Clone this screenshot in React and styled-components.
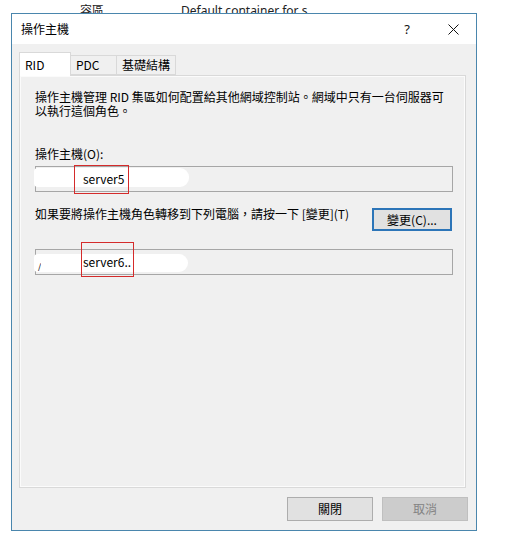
import React from "react";
import styled, { createGlobalStyle } from "styled-components";

const GlobalStyle = createGlobalStyle`
  html, body {
    margin: 0;
    padding: 0;
    background: #fff;
  }
  body {
    font-family: "Noto Sans CJK TC", "Noto Sans", sans-serif;
    font-size: 12px;
    color: #000;
  }
`;

class App extends React.Component {
    constructor(props) {
        super(props);

        this.state = {
            tabs: ["RID", "PDC", "基礎結構"],
            active: 0
        };
    }

    render() {
        return (
            <Page>
                <GlobalStyle/>
                <Backdrop>
                    <BackText left={80}>容區</BackText>
                    <BackText left={77}>Default container for s</BackText>
                </Backdrop>

                <Dialog>
                    <TitleBar>
                        <Title>操作主機</Title>
                        <CaptionButton>?</CaptionButton>
                        <CaptionButton>
                            <svg width="11" height="11" viewBox="0 0 11 11">
                                <path d="M0.5 0.5 L10.5 10.5 M10.5 0.5 L0.5 10.5" stroke="#111" strokeWidth="1" fill="none"/>
                            </svg>
                        </CaptionButton>
                    </TitleBar>

                    <Body>
                        <TabStrip>
                            {this.state.tabs.map((t, i) => (
                                <Tab key={t} active={i === this.state.active} w={[52, 47, 60][i]}>
                                    {t}
                                </Tab>
                            ))}
                        </TabStrip>

                        <Panel>
                            <Description>
                                <Line>操作主機管理 RID 集區如何配置給其他網域控制站。網域中只有一台伺服器可</Line>
                                <Line>以執行這個角色。</Line>
                            </Description>

                            <Label>操作主機(O):</Label>
                            <Field>
                                <Redaction left={-2} top={1} w={155} h={19}/>
                                <FieldText>server5</FieldText>
                                <Highlight left={38} top={-2} w={55} h={29}/>
                            </Field>

                            <TransferRow>
                                <RowText>如果要將操作主機角色轉移到下列電腦，請按一下 [變更](T)</RowText>
                                <DefaultButton>變更(C)...</DefaultButton>
                            </TransferRow>

                            <Field gap={18}>
                                <Redaction left={-2} top={4} w={154} h={18}/>
                                <Stray>/</Stray>
                                <FieldText>server6..</FieldText>
                                <Highlight left={45} top={-8} w={53} h={35}/>
                            </Field>
                        </Panel>

                        <Footer>
                            <Button>關閉</Button>
                            <Button disabled>取消</Button>
                        </Footer>
                    </Body>
                </Dialog>
            </Page>
        );
    }
}

const Page = styled.div`
width: 505px;
height: 547px;
overflow: hidden;
background: #fff;
`;

const Backdrop = styled.div`
display: flex;
height: 13px;
overflow: hidden;
padding-top: 4px;
box-sizing: border-box;
`;

const BackText = styled.span`
margin-left: ${props => props.left}px;
font-family: "Noto Sans", "Noto Sans CJK TC", sans-serif;
font-size: 12px;
line-height: 14px;
color: #222;
white-space: nowrap;
`;

const Dialog = styled.div`
margin-left: 11px;
width: 466px;
height: 518px;
box-sizing: border-box;
border: 1px solid #4a86ad;
background: #f0f0f0;
display: flex;
flex-direction: column;
`;

const TitleBar = styled.div`
height: 30px;
flex-shrink: 0;
background: #fff;
display: flex;
align-items: center;
padding-left: 9px;
`;

const Title = styled.div`
flex: 1;
line-height: 14px;
`;

const CaptionButton = styled.div`
width: 46px;
height: 30px;
display: flex;
align-items: center;
justify-content: center;
font-family: "Noto Sans", sans-serif;
font-size: 13px;
color: #111;
`;

const Body = styled.div`
flex: 1;
display: flex;
flex-direction: column;
padding: 8px 8px 8px 7px;
`;

const TabStrip = styled.div`
display: flex;
align-items: flex-end;
height: 23px;
position: relative;
z-index: 1;
`;

const Tab = styled.div`
box-sizing: border-box;
width: ${props => props.w}px;
height: ${props => props.active ? 24 : 20}px;
margin-bottom: ${props => props.active ? -1 : 0}px;
margin-left: -1px;
&:first-child { margin-left: 0; }
border: 1px solid #d9d9d9;
border-bottom: ${props => props.active ? "none" : "1px solid #d9d9d9"};
background: ${props => props.active ? "#fff" : "#f0f0f0"};
padding-left: 5px;
display: flex;
align-items: center;
line-height: 14px;
`;

const Panel = styled.div`
box-sizing: border-box;
width: 447px;
height: 413px;
border: 1px solid #d9d9d9;
box-shadow: inset 0 0 0 1px #fbfbfb;
background: #f0f0f0;
padding: 14px 12px 0 15px;
display: flex;
flex-direction: column;
`;

const Description = styled.div`
display: flex;
flex-direction: column;
`;

const Line = styled.div`
height: 14px;
line-height: 14px;
white-space: nowrap;
`;

const Label = styled.div`
margin-top: 29px;
line-height: 14px;
`;

const Field = styled.div`
position: relative;
margin-top: ${props => props.gap || 5}px;
height: 26px;
box-sizing: border-box;
border: 1px solid #a6a6a6;
background: #f0f0f0;
display: flex;
align-items: center;
padding-left: 47px;
`;

const Redaction = styled.div`
position: absolute;
left: ${props => props.left}px;
top: ${props => props.top}px;
width: ${props => props.w}px;
height: ${props => props.h}px;
background: #fff;
border-radius: 4px 9px 9px 4px;
`;

const Stray = styled.span`
position: absolute;
left: 1px;
top: 13px;
height: 8px;
overflow: hidden;
font-size: 11px;
line-height: 8px;
color: #333;
`;

const FieldText = styled.span`
position: relative;
line-height: 14px;
`;

const Highlight = styled.div`
position: absolute;
left: ${props => props.left}px;
top: ${props => props.top}px;
width: ${props => props.w}px;
height: ${props => props.h}px;
box-sizing: border-box;
border: 1px solid #d42b2b;
`;

const TransferRow = styled.div`
display: flex;
justify-content: space-between;
align-items: flex-start;
margin-top: 15px;
padding-right: 1px;
`;

const RowText = styled.div`
line-height: 14px;
white-space: nowrap;
`;

const DefaultButton = styled.div`
margin-top: 1px;
width: 80px;
height: 23px;
box-sizing: border-box;
border: 2px solid #2c75b8;
background: #e1e1e1;
display: flex;
align-items: center;
justify-content: center;
line-height: 14px;
`;

const Footer = styled.div`
display: flex;
justify-content: flex-end;
gap: 9px;
margin-top: 9px;
`;

const Button = styled.div`
width: 86px;
height: 24px;
box-sizing: border-box;
border: 1px solid ${props => props.disabled ? "#bfbfbf" : "#adadad"};
background: ${props => props.disabled ? "#cccccc" : "#e1e1e1"};
color: ${props => props.disabled ? "#838383" : "#000"};
display: flex;
align-items: center;
justify-content: center;
line-height: 14px;
`;

export default App;
